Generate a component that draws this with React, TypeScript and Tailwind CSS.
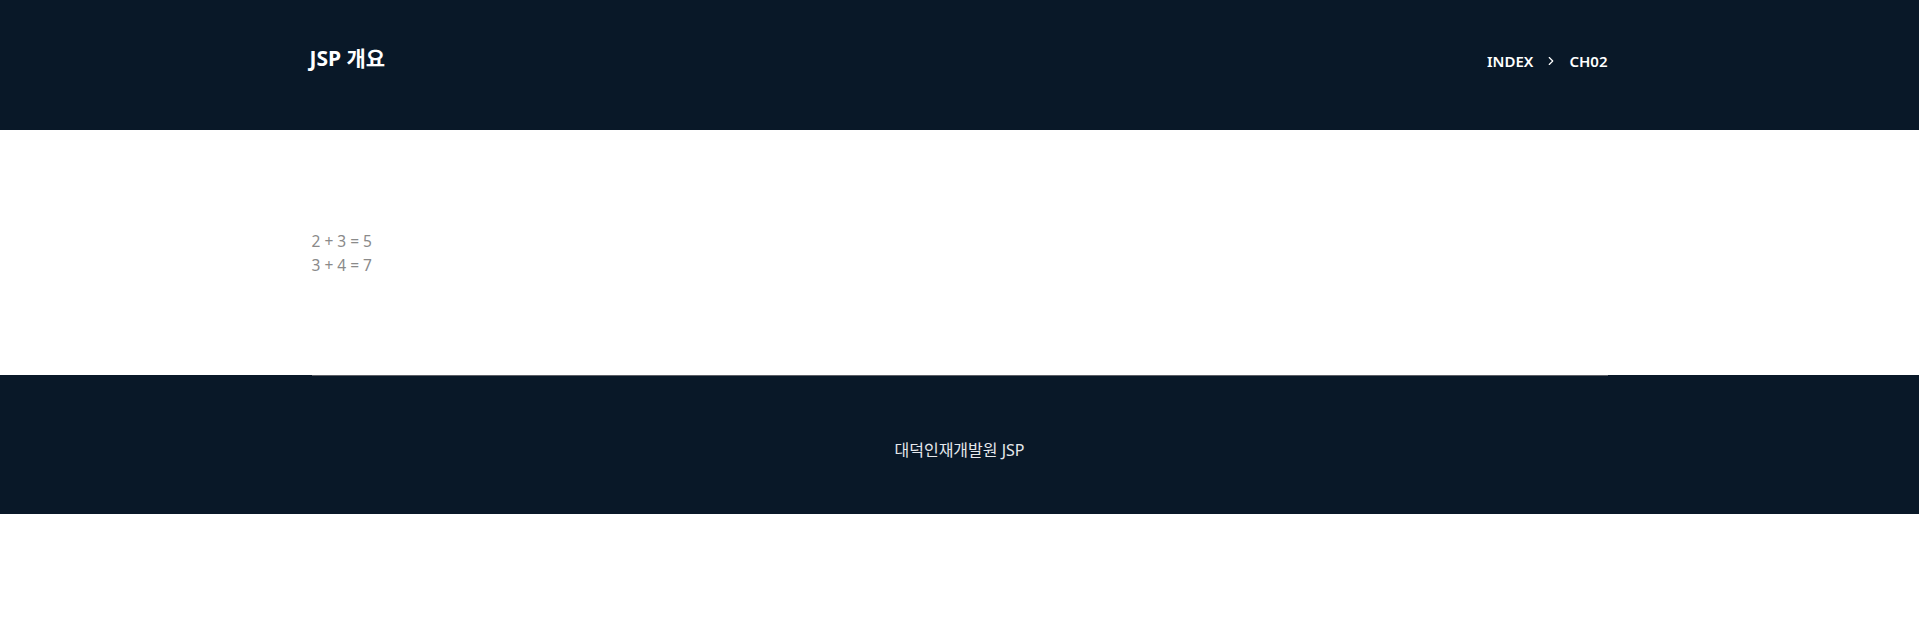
import { ChevronRight } from "lucide-react";

function App() {
  return (
    <div className="w-full min-h-screen bg-white" style={{ fontFamily: '"Noto Sans", "Noto Sans CJK KR", sans-serif' }}>
      {/* header */}
      <header className="w-full h-[130px] bg-[#091828]">
        <div className="w-[1296px] h-full mx-auto flex justify-between items-center pb-[12px]">
          <h1 className="text-[21px] font-bold text-white -ml-[2px]">JSP 개요</h1>
          <nav className="flex items-center text-[15px] font-semibold text-white mt-[4px]">
            <span>INDEX</span>
            <ChevronRight className="w-[14px] h-[14px] mx-[11px]" strokeWidth={2} />
            <span>CH02</span>
          </nav>
        </div>
      </header>

      {/* content */}
      <main className="w-full h-[245px]">
        <div className="w-[1296px] mx-auto pt-[99px] text-[15.5px] leading-[24px] text-[#8a8a8a]">
          <div>2 + 3 = 5</div>
          <div>3 + 4 = 7</div>
        </div>
      </main>

      {/* footer */}
      <footer className="w-full h-[139px] bg-[#091828]">
        <div className="w-[1296px] h-full mx-auto border-t border-[#5c5f66] pt-[62px] text-center text-[16px] leading-[24px] text-[#e6e8ec]">
          대덕인재개발원 JSP
        </div>
      </footer>
    </div>
  );
}

export default App;
